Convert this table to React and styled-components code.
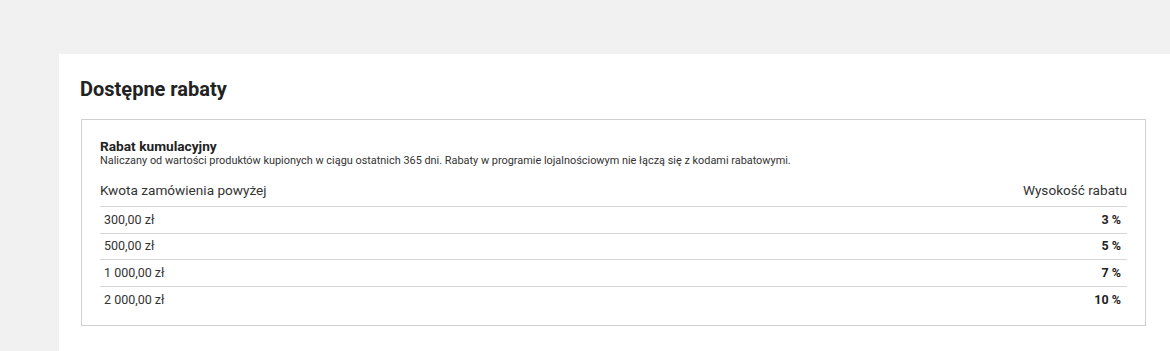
import React from "react";
import styled, { createGlobalStyle } from "styled-components";

const discounts = [
  { from: "300,00 zł", value: "3 %" },
  { from: "500,00 zł", value: "5 %" },
  { from: "1 000,00 zł", value: "7 %" },
  { from: "2 000,00 zł", value: "10 %" },
];

const App = () => {
  return (
    <>
      <GlobalStyle />
      <StylePage>
        <StylePanel>
          <StyleHeading>Dostępne rabaty</StyleHeading>
          <StyleBox>
            <StyleBoxTitle>Rabat kumulacyjny</StyleBoxTitle>
            <StyleBoxInfo>
              Naliczany od wartości produktów kupionych w ciągu ostatnich 365
              dni. Rabaty w programie lojalnościowym nie łączą się z kodami
              rabatowymi.
            </StyleBoxInfo>
            <StyleTable>
              <thead>
                <tr>
                  <StyleHeadCell>Kwota zamówienia powyżej</StyleHeadCell>
                  <StyleHeadCell align="right">Wysokość rabatu</StyleHeadCell>
                </tr>
              </thead>
              <tbody>
                {discounts.map((item) => (
                  <StyleRow key={item.from}>
                    <StyleCell>{item.from}</StyleCell>
                    <StyleCell align="right" bold>
                      {item.value}
                    </StyleCell>
                  </StyleRow>
                ))}
              </tbody>
            </StyleTable>
          </StyleBox>
        </StylePanel>
      </StylePage>
    </>
  );
};

export default App;

const GlobalStyle = createGlobalStyle`
  body {
    margin: 0;
    background: #f1f1f1;
    font-family: Roboto, "Liberation Sans", sans-serif;
    color: #333;
  }
`;

const StylePage = styled.div`
  padding: 54px 0 0 59px;
  height: 351px;
  box-sizing: border-box;
  overflow: hidden;
`;

const StylePanel = styled.div`
  background: #fff;
  padding: 23px 24px 40px 21px;
  min-height: 400px;
`;

const StyleHeading = styled.h2`
  margin: 0 0 18px;
  font-size: 20px;
  line-height: 24px;
  font-weight: 700;
  color: #222;
`;

const StyleBox = styled.div`
  margin-left: 1px;
  border: 1px solid #d0d0d0;
  padding: 18px 18px 12px 18px;
`;

const StyleBoxTitle = styled.div`
  font-size: 13.7px;
  line-height: 16px;
  font-weight: 700;
  color: #222;
`;

const StyleBoxInfo = styled.div`
  font-size: 10.9px;
  line-height: 14px;
  color: #333;
`;

const StyleTable = styled.table`
  width: 100%;
  margin-top: 6px;
  border-collapse: collapse;
`;

const StyleHeadCell = styled.th`
  padding: 8px 0;
  font-size: 13.6px;
  line-height: 16px;
  font-weight: 400;
  color: #333;
  text-align: ${(props) => props.align || "left"};
`;

const StyleRow = styled.tr`
  border-top: 1px solid #d6d6d6;
`;

const StyleCell = styled.td`
  height: 26.67px;
  padding: 0 6px 0 4px;
  box-sizing: border-box;
  font-size: 12.5px;
  line-height: 16px;
  font-weight: ${(props) => (props.bold ? 700 : 400)};
  color: ${(props) => (props.bold ? "#222" : "#333")};
  text-align: ${(props) => props.align || "left"};
`;
